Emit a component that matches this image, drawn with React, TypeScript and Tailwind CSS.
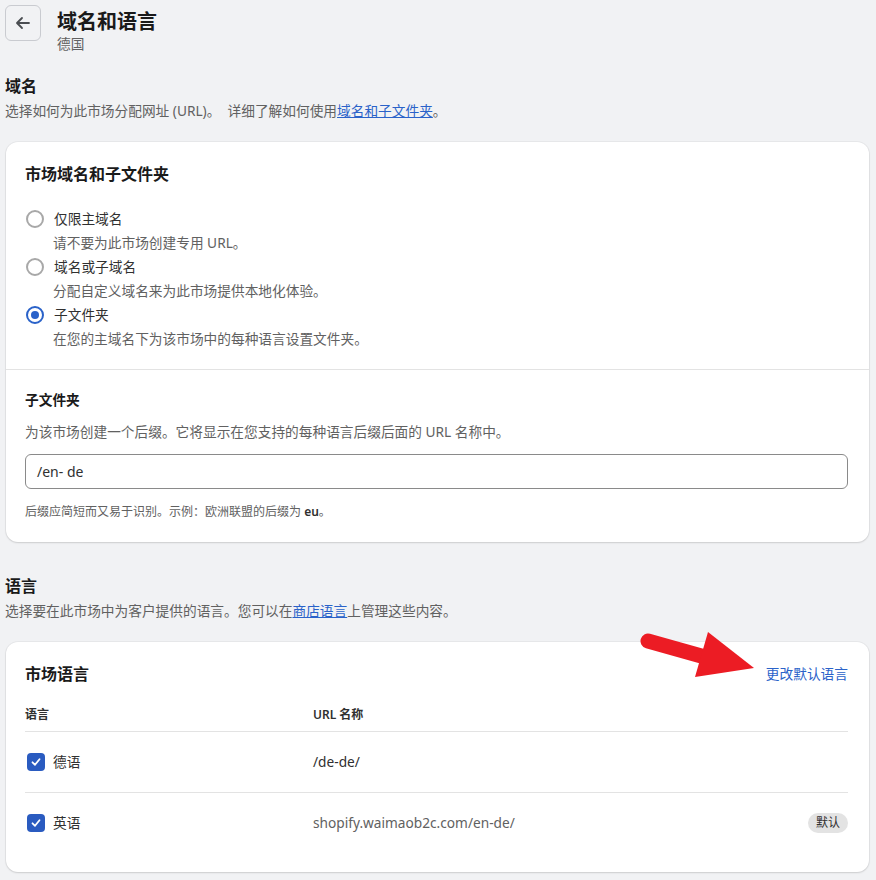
import React from "react";

const font = { fontFamily: '"Segoe UI", "Noto Sans", "Noto Sans CJK SC", sans-serif' };

function Radio({ checked }: { checked?: boolean }) {
  return checked ? (
    <span className="flex h-[18px] w-[18px] shrink-0 items-center justify-center rounded-full border-2 border-[#2a62c9] bg-white">
      <span className="block h-[8px] w-[8px] rounded-full bg-[#2a62c9]" />
    </span>
  ) : (
    <span className="block h-[18px] w-[18px] shrink-0 rounded-full border-2 border-[#a8a8a8] bg-white" />
  );
}

function Check() {
  return (
    <span className="flex h-[18px] w-[18px] shrink-0 items-center justify-center rounded-[4px] bg-[#2a5bc0]">
      <svg width="12" height="12" viewBox="0 0 12 12" fill="none">
        <path d="M2.5 6.3 L5 8.8 L9.5 3.2" stroke="white" strokeWidth="1.8" strokeLinecap="round" strokeLinejoin="round" />
      </svg>
    </span>
  );
}

export default function App() {
  const options = [
    { label: "仅限主域名", desc: "请不要为此市场创建专用 URL。" },
    { label: "域名或子域名", desc: "分配自定义域名来为此市场提供本地化体验。" },
    { label: "子文件夹", desc: "在您的主域名下为该市场中的每种语言设置文件夹。", checked: true },
  ];
  return (
    <div style={font} className="relative min-h-[880px] w-[876px] bg-[#f1f2f4] pl-[6px] pr-[7px] pt-[5px] text-[#303030]">
      {/* header */}
      <div className="flex items-start">
        <div className="-ml-px flex h-[36px] w-[36px] items-center justify-center rounded-[6px] border border-[#c9cbd0] bg-[#f1f2f4]">
          <svg width="20" height="20" viewBox="0 0 20 20" fill="none">
            <path d="M16 10H4.5M9 5l-5 5 5 5" stroke="#4a4d51" strokeWidth="1.8" strokeLinecap="round" strokeLinejoin="round" />
          </svg>
        </div>
        <div className="ml-[16px] flex flex-col">
          <div className="mt-[3px] text-[20px] font-bold leading-[28px] text-[#1a1a1a]">域名和语言</div>
          <div className="text-[13.7px] leading-[16px] text-[#616161]">德国</div>
        </div>
      </div>

      {/* domain section */}
      <div className="-ml-px mt-[22px] text-[16px] font-semibold leading-[24px] text-[#1a1a1a]">域名</div>
      <div className="-ml-px mt-[3px] text-[13.7px] leading-[20px] text-[#616161]">
        选择如何为此市场分配网址 (URL)。&nbsp; 详细了解如何使用<span className="text-[#2a62c9] underline">域名和子文件夹</span>。
      </div>

      <div className="mt-[21px] rounded-[12px] bg-white shadow-[0_1px_2px_rgba(0,0,0,0.12),0_0_0_1px_rgba(0,0,0,0.04)]">
        <div className="pb-[18px] pl-[19px] pr-[21px] pt-[20px]">
          <div className="text-[16px] font-semibold leading-[24px] text-[#1a1a1a]">市场域名和子文件夹</div>
          <div className="mt-[21px] flex flex-col">
            {options.map((o) => (
              <div key={o.label} className="flex flex-col">
                <div className="flex h-[24px] items-center">
                  <span className="ml-[1px] mr-[10px] flex"><Radio checked={o.checked} /></span>
                  <span className="text-[13.7px] text-[#303030]">{o.label}</span>
                </div>
                <div className="ml-[28px] h-[24px] text-[13.7px] leading-[24px] text-[#616161]">{o.desc}</div>
              </div>
            ))}
          </div>
        </div>
        <div className="border-t border-[#e3e3e3] pb-[22px] pl-[19px] pr-[21px] pt-[20px]">
          <div className="text-[13.7px] font-semibold leading-[20px] text-[#1a1a1a]">子文件夹</div>
          <div className="mt-[12px] text-[13.7px] leading-[20px] text-[#616161]">为该市场创建一个后缀。它将显示在您支持的每种语言后缀后面的 URL 名称中。</div>
          <div className="mt-[12px] flex h-[35px] items-center rounded-[6px] border border-[#8a8a8a] px-[11px] text-[14px] text-[#303030]">/en- de</div>
          <div className="mt-[15px] text-[12px] leading-[16px] text-[#616161]">
            后缀应简短而又易于识别。示例：欧洲联盟的后缀为 <span className="font-semibold text-[#303030]">eu</span>。
          </div>
        </div>
      </div>

      {/* language section */}
      <div className="-ml-px mt-[32px] text-[16px] font-semibold leading-[24px] text-[#1a1a1a]">语言</div>
      <div className="-ml-px mt-[3px] text-[13.7px] leading-[20px] text-[#616161]">
        选择要在此市场中为客户提供的语言。您可以在<span className="text-[#2a62c9] underline">商店语言</span>上管理这些内容。
      </div>

      <div className="mt-[21px] rounded-[12px] bg-white pb-[19px] pl-[19px] pr-[21px] pt-[20px] shadow-[0_1px_2px_rgba(0,0,0,0.12),0_0_0_1px_rgba(0,0,0,0.04)]">
        <div className="flex items-center justify-between">
          <div className="text-[16px] font-semibold leading-[24px] text-[#1a1a1a]">市场语言</div>
          <div className="text-[13.7px] text-[#2a62c9]">更改默认语言</div>
        </div>
        <div className="mt-[21px] grid grid-cols-[288px_1fr_auto] border-b border-[#e3e3e3] pb-[8px] text-[12px] font-semibold leading-[16px] text-[#303030]">
          <div>语言</div>
          <div>URL 名称</div>
          <div />
        </div>
        <div className="grid h-[61px] grid-cols-[288px_1fr_auto] items-center border-b border-[#e3e3e3] text-[13.7px]">
          <div className="flex items-center gap-[8px] pl-[2px]"><Check /><span>德语</span></div>
          <div className="text-[#303030]">/de-de/</div>
          <div />
        </div>
        <div className="grid h-[60px] grid-cols-[288px_1fr_auto] items-center text-[13.7px]">
          <div className="flex items-center gap-[8px] pl-[2px]"><Check /><span>英语</span></div>
          <div className="text-[#616161]">shopify.waimaob2c.com/en-de/</div>
          <div className="rounded-full bg-[#e3e3e3] px-[8px] py-[2px] text-[12px] leading-[16px] text-[#303030]">默认</div>
        </div>
      </div>

      {/* red arrow annotation */}
      <svg className="absolute left-[640px] top-[625px]" width="130" height="60" viewBox="640 625 130 60">
        <path d="M648 641 L712 659" stroke="#ec1c24" strokeWidth="15" strokeLinecap="round" />
        <path d="M708 632 L754 668 L695 677 Z" fill="#ec1c24" />
      </svg>
    </div>
  );
}
